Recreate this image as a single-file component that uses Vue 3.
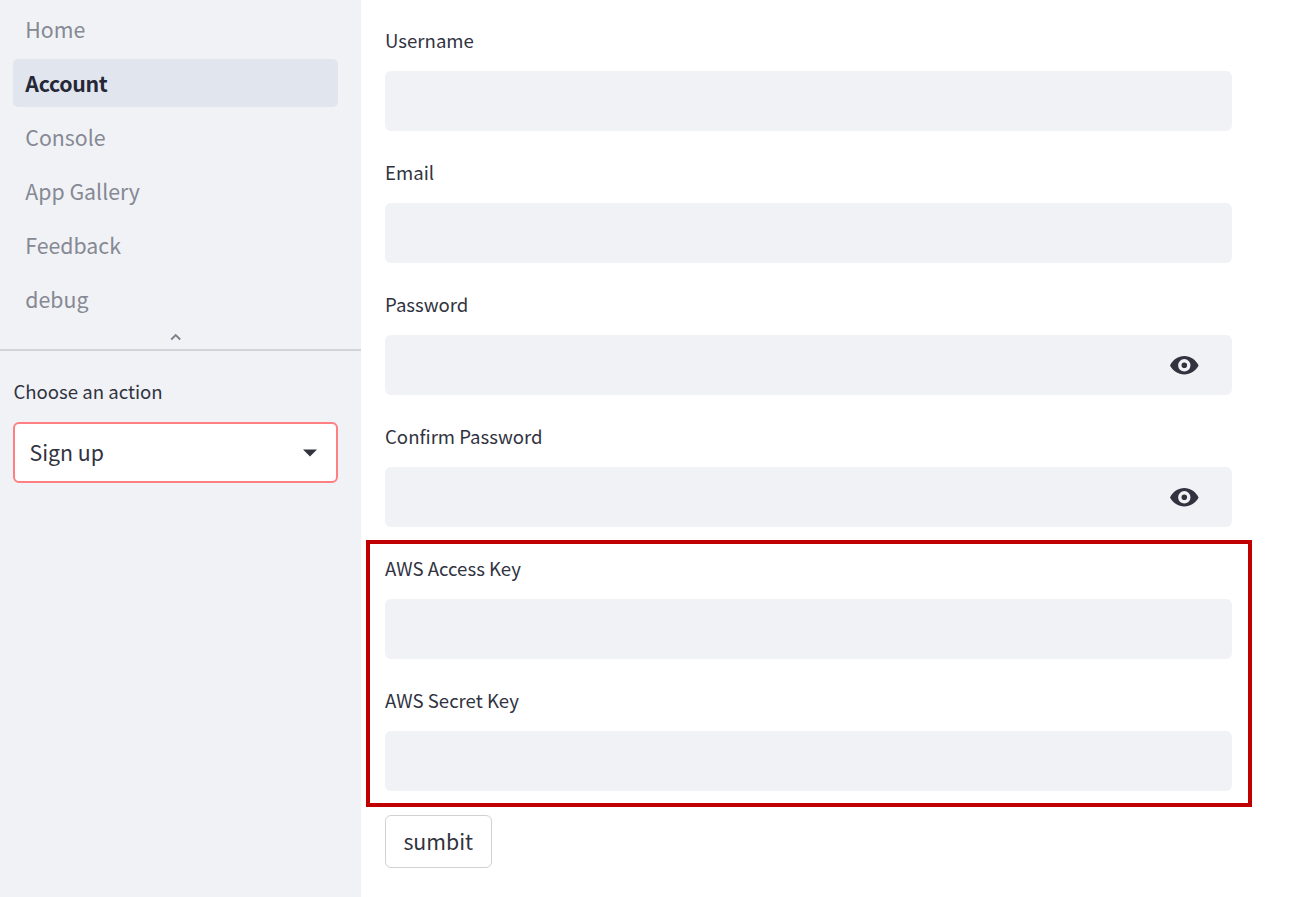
<script setup>
const pages = ['Home', 'Account', 'Console', 'App Gallery', 'Feedback', 'debug']
const fields = [
  { label: 'Username' },
  { label: 'Email' },
  { label: 'Password', secret: true },
  { label: 'Confirm Password', secret: true },
]
const keys = ['AWS Access Key', 'AWS Secret Key']
</script>

<template>
  <div class="app">
    <aside class="sidebar">
      <nav class="nav">
        <a v-for="p in pages" :key="p" class="link" :class="{ active: p === 'Account' }">{{ p }}</a>
      </nav>
      <div class="collapse">
        <svg width="12" height="8" viewBox="0 0 12 8"><path d="M1.200 6.500 5.700 2l4.500 4.500" fill="none" stroke="#7d808a" stroke-width="1.900" /></svg>
      </div>
      <div class="action">
        <label class="label">Choose an action</label>
        <div class="select">
          <span>Sign up</span>
          <svg width="14" height="8" viewBox="0 0 14 8"><path d="M0 .5h14L7 7.500z" fill="#31333f" /></svg>
        </div>
      </div>
    </aside>
    <main class="main">
      <div v-for="f in fields" :key="f.label" class="field">
        <label class="label">{{ f.label }}</label>
        <div class="input">
          <svg v-if="f.secret" class="eye" width="29" height="20" viewBox="0 0 29 20">
            <path fill-rule="evenodd" fill="#31333f" d="M14.300 1C8.300 1 3 4.500 0 10.500c3 5.500 8.300 9 14.300 9s11.300-3.500 14.300-9C25.600 4.500 20.300 1 14.300 1zM14.300 16.500a6.200 6.200 0 1 1 0-12.400 6.200 6.200 0 0 1 0 12.400zM14.300 7.500a2.800 2.800 0 1 0 0 5.600 2.800 2.800 0 0 0 0-5.600z" />
          </svg>
        </div>
      </div>
      <section class="highlight">
        <div v-for="k in keys" :key="k" class="field">
          <label class="label">{{ k }}</label>
          <div class="input"></div>
        </div>
      </section>
      <button class="submit">sumbit</button>
    </main>
  </div>
</template>

<style>
body { margin: 0; background: #fff; overflow: hidden; }
</style>

<style scoped>
.app {
  display: flex;
  height: 897px;
  overflow: hidden;
  color: #31333f;
  font-family: "Noto Sans CJK SC", "Noto Sans", sans-serif;
  font-size: 21.3px;
}
.app * { box-sizing: border-box; }
.sidebar { width: 361px; flex: none; background: #f0f2f6; }
.nav { display: flex; flex-direction: column; gap: 6px; padding: 5px 23.500px 0 13.300px; }
.link { height: 48px; line-height: 48px; padding-left: 12px; border-radius: 5px; color: #868993; }
.link.active { background: #e1e6ee; color: #262838; font-weight: 600; letter-spacing: -0.3px; }
.collapse { height: 28px; display: flex; justify-content: center; padding: 10px 10px 0 0; border-bottom: 2px solid #d1d3d9; }
.action { padding: 26px 23px 0 13px; }
.label { display: block; height: 30px; line-height: 28px; font-size: 18.6px; white-space: nowrap; }
.action .label { padding-left: 0.400px; }
.select { display: flex; align-items: center; justify-content: space-between; height: 61px; margin-top: 15px; padding: 0 19px 0 14.500px; border: 2px solid #ff8082; border-radius: 6px; background: #fff; }
.select span { padding-bottom: 2px; }
.main { flex: 1; padding: 26px 39px 0 5px; }
.field { height: 132px; padding: 0 20px 0 19px; }
.input { display: flex; align-items: center; justify-content: flex-end; height: 60px; margin-top: 15px; padding-right: 33px; border-radius: 6px; background: #f0f2f6; }
.highlight { height: 267px; margin-top: -14px; padding-top: 10px; border: 4px solid #c00000; }
.highlight .field { padding: 0 16px 0 15px; }
.submit { display: block; width: 106.500px; height: 53px; margin: 8px 0 0 19px; padding: 0 0 3px; border: 1px solid #d0d1d4; border-radius: 6px; background: #fff; color: inherit; font: inherit; }
</style>
